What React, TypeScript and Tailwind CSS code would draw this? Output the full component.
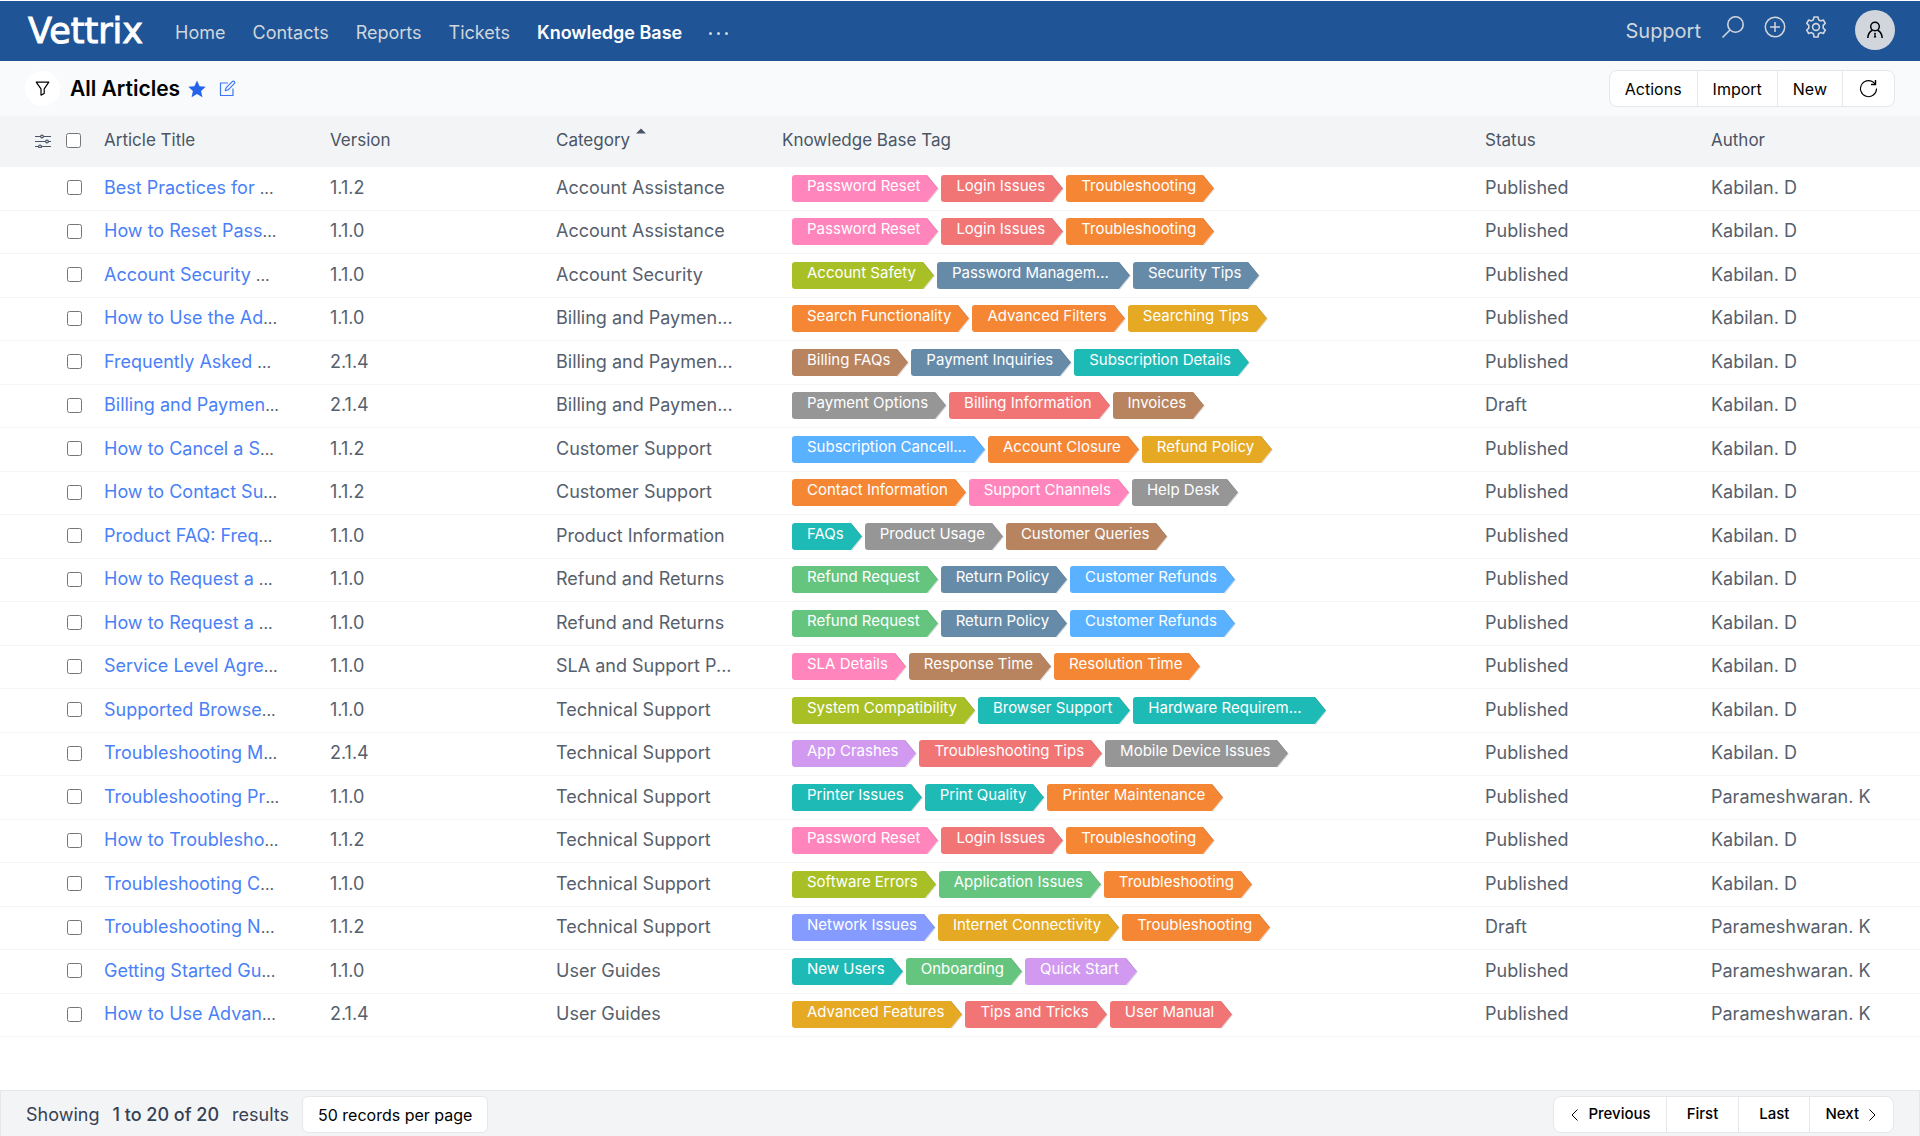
import React from 'react';

type Tag = [label: string, color: string];

const PINK = 'text-[#ff85bc]';
const RED = 'text-[#f17575]';
const ORANGE = 'text-[#f58634]';
const LIME = 'text-[#a8c025]';
const SLATE = 'text-[#668ba9]';
const AMBER = 'text-[#e6a924]';
const BROWN = 'text-[#b88460]';
const TEAL = 'text-[#1ebab6]';
const GRAY = 'text-[#969696]';
const SKY = 'text-[#59b1ff]';
const GREEN = 'text-[#65c57f]';
const PURPLE = 'text-[#d199f0]';
const INDIGO = 'text-[#869bff]';

const loginTags: Tag[] = [['Password Reset', PINK], ['Login Issues', RED], ['Troubleshooting', ORANGE]];
const refundTags: Tag[] = [['Refund Request', GREEN], ['Return Policy', SLATE], ['Customer Refunds', SKY]];

const articles: { title: string; version: string; category: string; tags: Tag[]; status: string; author: string }[] = [
  { title: 'Best Practices for ', version: '1.1.2', category: 'Account Assistance', tags: loginTags, status: 'Published', author: 'Kabilan. D' },
  { title: 'How to Reset Pass', version: '1.1.0', category: 'Account Assistance', tags: loginTags, status: 'Published', author: 'Kabilan. D' },
  { title: 'Account Security ', version: '1.1.0', category: 'Account Security', tags: [['Account Safety', LIME], ['Password Managem...', SLATE], ['Security Tips', SLATE]], status: 'Published', author: 'Kabilan. D' },
  { title: 'How to Use the Ad', version: '1.1.0', category: 'Billing and Paymen...', tags: [['Search Functionality', ORANGE], ['Advanced Filters', ORANGE], ['Searching Tips', AMBER]], status: 'Published', author: 'Kabilan. D' },
  { title: 'Frequently Asked ', version: '2.1.4', category: 'Billing and Paymen...', tags: [['Billing FAQs', BROWN], ['Payment Inquiries', SLATE], ['Subscription Details', TEAL]], status: 'Published', author: 'Kabilan. D' },
  { title: 'Billing and Paymen', version: '2.1.4', category: 'Billing and Paymen...', tags: [['Payment Options', GRAY], ['Billing Information', RED], ['Invoices', BROWN]], status: 'Draft', author: 'Kabilan. D' },
  { title: 'How to Cancel a S', version: '1.1.2', category: 'Customer Support', tags: [['Subscription Cancell...', SKY], ['Account Closure', ORANGE], ['Refund Policy', AMBER]], status: 'Published', author: 'Kabilan. D' },
  { title: 'How to Contact Su', version: '1.1.2', category: 'Customer Support', tags: [['Contact Information', ORANGE], ['Support Channels', PINK], ['Help Desk', GRAY]], status: 'Published', author: 'Kabilan. D' },
  { title: 'Product FAQ: Freq', version: '1.1.0', category: 'Product Information', tags: [['FAQs', TEAL], ['Product Usage', GRAY], ['Customer Queries', BROWN]], status: 'Published', author: 'Kabilan. D' },
  { title: 'How to Request a ', version: '1.1.0', category: 'Refund and Returns', tags: refundTags, status: 'Published', author: 'Kabilan. D' },
  { title: 'How to Request a ', version: '1.1.0', category: 'Refund and Returns', tags: refundTags, status: 'Published', author: 'Kabilan. D' },
  { title: 'Service Level Agre', version: '1.1.0', category: 'SLA and Support P...', tags: [['SLA Details', PINK], ['Response Time', BROWN], ['Resolution Time', ORANGE]], status: 'Published', author: 'Kabilan. D' },
  { title: 'Supported Browse', version: '1.1.0', category: 'Technical Support', tags: [['System Compatibility', LIME], ['Browser Support', TEAL], ['Hardware Requirem...', TEAL]], status: 'Published', author: 'Kabilan. D' },
  { title: 'Troubleshooting M', version: '2.1.4', category: 'Technical Support', tags: [['App Crashes', PURPLE], ['Troubleshooting Tips', RED], ['Mobile Device Issues', GRAY]], status: 'Published', author: 'Kabilan. D' },
  { title: 'Troubleshooting Pr', version: '1.1.0', category: 'Technical Support', tags: [['Printer Issues', TEAL], ['Print Quality', TEAL], ['Printer Maintenance', ORANGE]], status: 'Published', author: 'Parameshwaran. K' },
  { title: 'How to Troublesho', version: '1.1.2', category: 'Technical Support', tags: loginTags, status: 'Published', author: 'Kabilan. D' },
  { title: 'Troubleshooting C', version: '1.1.0', category: 'Technical Support', tags: [['Software Errors', LIME], ['Application Issues', GREEN], ['Troubleshooting', ORANGE]], status: 'Published', author: 'Kabilan. D' },
  { title: 'Troubleshooting N', version: '1.1.2', category: 'Technical Support', tags: [['Network Issues', INDIGO], ['Internet Connectivity', AMBER], ['Troubleshooting', ORANGE]], status: 'Draft', author: 'Parameshwaran. K' },
  { title: 'Getting Started Gu', version: '1.1.0', category: 'User Guides', tags: [['New Users', TEAL], ['Onboarding', GREEN], ['Quick Start', PURPLE]], status: 'Published', author: 'Parameshwaran. K' },
  { title: 'How to Use Advan', version: '2.1.4', category: 'User Guides', tags: [['Advanced Features', AMBER], ['Tips and Tricks', RED], ['User Manual', RED]], status: 'Published', author: 'Parameshwaran. K' },
];

const navLinks = ['Home', 'Contacts', 'Reports', 'Tickets', 'Knowledge Base'];

const iconProps = { fill: 'none', stroke: 'currentColor', 'aria-hidden': true } as const;

const SearchIcon = () => (
  <svg width="24" height="24" viewBox="0 0 24 24" strokeWidth="1.6" {...iconProps}>
    <circle cx="14.5" cy="9.5" r="7.7" />
    <path d="M9 15 1.5 22.5" />
  </svg>
);

const PlusIcon = () => (
  <svg width="22" height="22" viewBox="0 0 22 22" strokeWidth="1.5" {...iconProps}>
    <circle cx="11" cy="11" r="9.7" />
    <path d="M11 6v10M6 11h10" />
  </svg>
);

const GearIcon = () => (
  <svg width="22" height="22" viewBox="0 0 22 22" strokeWidth="1.6" strokeLinejoin="round" {...iconProps}>
    <path d="M9 1h4l.6 2.8 2 1.1 2.7-.9 2 3.4-2.1 1.9v2.9l2.1 1.9-2 3.4-2.7-.9-2 1.1L13 21H9l-.6-3.3-2-1.1-2.7.9-2-3.4 2.1-1.9V9.3L1.7 7.4l2-3.4 2.7.9 2-1.1z" />
    <circle cx="11" cy="11" r="3.4" />
  </svg>
);

const UserIcon = () => (
  <svg width="18" height="18" viewBox="0 0 18 18" strokeWidth="1.5" {...iconProps}>
    <circle cx="9" cy="5.5" r="4.3" />
    <path d="M1.8 17c.2-4 2-6.5 4.7-7.7M16.200 17c-.2-4-2-6.5-4.7-7.7" />
    <path d="M9 11.500l1 1-.5 1.500.8 2.500H7.700l.8-2.500L8 12.500z" fill="currentColor" stroke="none" />
  </svg>
);

const FilterIcon = () => (
  <svg width="15" height="15" viewBox="0 0 15 15" strokeWidth="1.2" strokeLinejoin="round" {...iconProps}>
    <path d="M1.2 1.2h12.6L9.2 7.8v4.7l-3.2 1.600V7.800z" />
  </svg>
);

const StarIcon = () => (
  <svg width="18" height="18" viewBox="0 0 18 18" fill="currentColor" aria-hidden="true">
    <path d="M9 .5l2.600 5.700 6.100.6-4.600 4.200 1.300 6.200L9 14l-5.400 3.200L4.900 11 .3 6.800l6.100-.6z" />
  </svg>
);

const EditIcon = () => (
  <svg width="17" height="17" viewBox="0 0 17 17" strokeWidth="1.2" strokeLinejoin="round" {...iconProps}>
    <path d="M9 3H1.500v12.500H14V8.500" />
    <path d="M6.300 10.700l.9-3 6.300-6.300c1.300-1 3 .8 2 2L9.200 9.800z" />
  </svg>
);

const ColumnsIcon = () => (
  <svg width="16" height="14" viewBox="0 0 16 14" strokeWidth="1.2" {...iconProps}>
    <path d="M0 2.500h5.500M8.500 2.500H16M0 7.500h10.500M13.500 7.500H16M0 12.500h3.500M6.500 12.500H16" />
    <circle cx="7" cy="2.500" r="1.400" />
    <circle cx="12" cy="7.500" r="1.400" />
    <circle cx="5" cy="12.500" r="1.400" />
  </svg>
);

const RefreshIcon = () => (
  <svg width="19" height="19" viewBox="0 0 19 19" strokeWidth="1.1" {...iconProps}>
    <path d="M16 5A8 8 0 1 0 17.500 9.500" />
    <path d="M16.500 1v4.500H12" strokeWidth="1.4" />
  </svg>
);

const Chevron = ({ d }: { d: string }) => (
  <svg width="7" height="12" viewBox="0 0 7 12" strokeWidth="1" {...iconProps}>
    <path d={d} />
  </svg>
);

const TagChip = ({ tag: [label, color] }: { tag: Tag }) => (
  <span className={`flex ${color}`}>
    <span className="h-[27px] rounded-l-[3px] bg-current pl-[15px] pr-[7px]">
      <span className={`block whitespace-nowrap text-[15px] leading-[22px] text-white ${label.endsWith('...') ? 'min-w-[160px]' : ''}`}>
        {label}
      </span>
    </span>
    <svg width="12" height="28" viewBox="0 0 12 28" aria-hidden="true">
      <path d="M0 0 11 13.500 0 27z" fill="currentColor" />
      <path d="M0 .3 11.300 14 .5 27.500" fill="none" stroke="#000" strokeOpacity=".16" />
    </svg>
  </span>
);

const Checkbox = ({ label }: { label: string }) => (
  <input type="checkbox" aria-label={label} className="block size-[15px]" />
);

const App = () => {
  return (
    <div className="flex min-h-screen flex-col bg-white font-['Inter',sans-serif] text-gray-600">
      <header className="mt-px flex h-[60px] items-center bg-[#1f5597] pl-7 pr-[25px] text-gray-300">
        <a href="#" className="font-['DejaVu_Sans',sans-serif] text-[35px] leading-none text-white [-webkit-text-stroke:1px_white]">Vettrix</a>
        <nav className="ml-8 flex items-center gap-[27px] text-lg">
          {navLinks.map((link) => (
            <a key={link} href="#" className={link === 'Knowledge Base' ? 'pt-1 font-semibold text-white' : 'pt-1'}>
              {link}
            </a>
          ))}
          <button aria-label="More" className="flex gap-[5px] pt-1">
            <span className="size-[3px] rounded-full bg-gray-300" />
            <span className="size-[3px] rounded-full bg-gray-300" />
            <span className="size-[3px] rounded-full bg-gray-300" />
          </button>
        </nav>
        <div className="ml-auto flex items-center">
          <a href="#" className="text-xl">Support</a>
          <div className="ml-5 flex items-center gap-[19px] pb-2">
            <button aria-label="Search"><SearchIcon /></button>
            <button aria-label="Add"><PlusIcon /></button>
            <button aria-label="Settings"><GearIcon /></button>
          </div>
          <button aria-label="Account" className="mb-[2px] ml-7 flex size-10 items-center justify-center rounded-full bg-gray-300 text-black">
            <UserIcon />
          </button>
        </div>
      </header>

      <div className="flex h-[55px] items-center bg-[#f9fafc] pl-[25px] pr-[25px] text-black">
        <button aria-label="Filter" className="flex size-[35px] items-center justify-center rounded-full bg-white">
          <FilterIcon />
        </button>
        <h1 className="ml-[10px] text-[21px] font-semibold">All Articles</h1>
        <button aria-label="Favourite" className="ml-2 text-[#2563eb]"><StarIcon /></button>
        <button aria-label="Edit view" className="ml-[13px] text-[#3b76f6]"><EditIcon /></button>
        <div className="ml-auto flex h-[37px] divide-x divide-gray-200 rounded-lg border border-gray-200 bg-white text-base">
          <button className="px-[15px]">Actions</button>
          <button className="px-[15px]">Import</button>
          <button className="px-[15px]">New</button>
          <button aria-label="Refresh" className="px-4"><RefreshIcon /></button>
        </div>
      </div>

      <table className="w-full table-fixed border-separate border-spacing-0 text-left">
        <colgroup>
          <col className="w-[104px]" />
          <col className="w-[226px]" />
          <col className="w-[226px]" />
          <col className="w-[226px]" />
          <col />
          <col className="w-[226px]" />
          <col className="w-[209px]" />
        </colgroup>
        <thead className="bg-gray-100 text-[17px]">
          <tr className="h-[51px]">
            <th className="pl-[35px]">
              <div className="flex items-center gap-[15px] pb-[2px]">
                <button aria-label="Choose columns"><ColumnsIcon /></button>
                <Checkbox label="Select all articles" />
              </div>
            </th>
            <th className="pb-[2px] font-normal">Article Title</th>
            <th className="pb-[2px] font-normal">Version</th>
            <th className="pb-[2px] font-normal">
              <button className="flex gap-[6px]">
                Category
                <svg width="10" height="6" viewBox="0 0 10 6" fill="currentColor" aria-hidden="true">
                  <path d="M0 5.500 5 .5l5 5z" />
                </svg>
              </button>
            </th>
            <th className="pb-[2px] font-normal">Knowledge Base Tag</th>
            <th className="pb-[2px] font-normal">Status</th>
            <th className="pb-[2px] font-normal">Author</th>
          </tr>
        </thead>
        <tbody className="text-lg leading-6 text-[#56606d]">
          {articles.map((article, index) => (
            <tr key={index} className="odd:h-[44px] even:h-[43px] *:border-b *:border-gray-100">
              <td className="pb-[2px] pl-[67px]"><Checkbox label={`Select ${article.title.trim()}`} /></td>
              <td className="whitespace-pre pb-[2px]">
                <a href="#" className="text-[#4a80f7]">{article.title}</a>
                <span className="text-base">...</span>
              </td>
              <td className="pb-[2px]">{article.version}</td>
              <td className="whitespace-nowrap pb-[2px]">{article.category}</td>
              <td>
                <div className="flex gap-[2px] pl-[10px]">
                  {article.tags.map((tag) => (
                    <TagChip key={tag[0]} tag={tag} />
                  ))}
                </div>
              </td>
              <td className="pb-[2px]">{article.status}</td>
              <td className="whitespace-nowrap pb-[2px]">{article.author}</td>
            </tr>
          ))}
        </tbody>
      </table>

      <footer className="mt-auto flex h-[46px] items-center border-x border-t border-gray-200 bg-gray-100 pl-[25px] pr-[25px] pt-[2px] text-gray-700">
        <p className="flex gap-[13px] text-lg">
          <span>Showing</span>
          <span className="font-medium">1 to 20 of 20</span>
          <span>results</span>
        </p>
        <button className="ml-[13px] h-[37px] rounded-md border border-gray-200 bg-white px-[15px] text-base text-black">
          50 records per page
        </button>
        <div className="ml-auto flex h-[37px] divide-x divide-gray-200 rounded-lg border border-gray-200 bg-white text-[15px] font-medium text-black">
          <button className="flex items-center gap-[10px] pl-[17px] pr-[15px]">
            <Chevron d="M6.500.5 1 6l5.500 5.500" />
            Previous
          </button>
          <button className="px-5">First</button>
          <button className="px-5">Last</button>
          <button className="flex items-center gap-[10px] pl-[15px] pr-[17px]">
            Next
            <Chevron d="M.5.5 6 6 .5 11.500" />
          </button>
        </div>
      </footer>
    </div>
  );
};

export default App;
